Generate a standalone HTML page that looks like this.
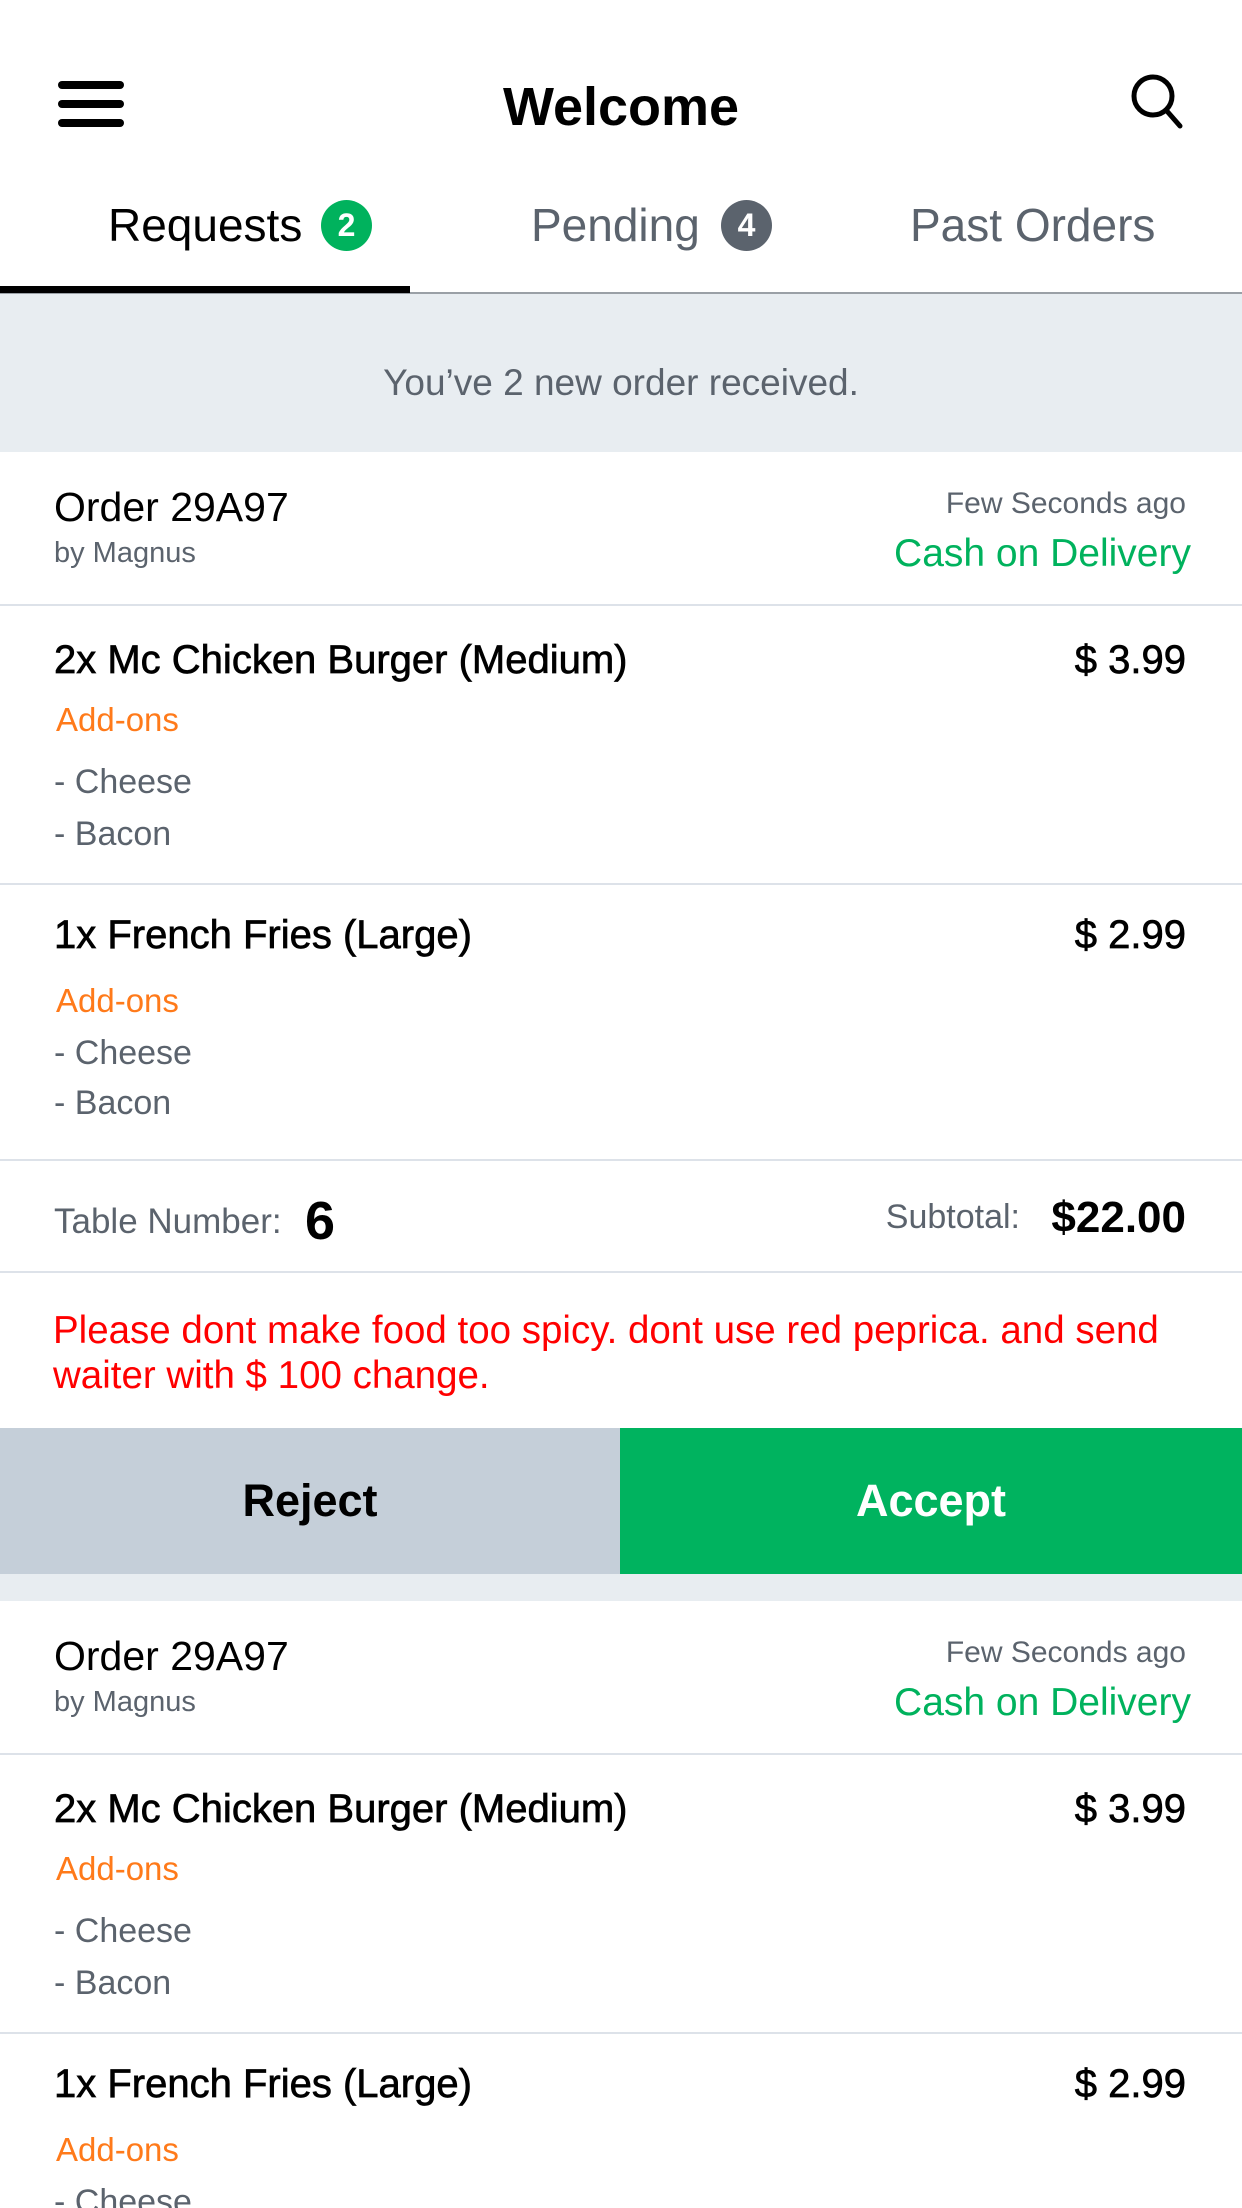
<!DOCTYPE html>
<html><head><meta charset="utf-8"><style>
*{margin:0;padding:0;box-sizing:border-box}
html,body{width:1242px;height:2208px;overflow:hidden;background:#fff;font-family:"Liberation Sans",sans-serif;position:relative}
.a{position:absolute;line-height:1;white-space:nowrap}
.card{position:absolute;left:0;width:1242px;background:#fff;overflow:hidden}
.hr{position:absolute;left:0;width:1242px;height:2px;background:#dde2e9}
.r{text-align:right;right:56px}
.gray{color:#5b636d}
.org{color:#ff7a1a}
.it{font-size:40px;color:#000;-webkit-text-stroke:0.7px #000}
</style></head><body>
<div class="a" style="left:58px;top:81px;width:66px;height:8px;background:#000;border-radius:4px"></div>
<div class="a" style="left:58px;top:100px;width:66px;height:8px;background:#000;border-radius:4px"></div>
<div class="a" style="left:58px;top:119px;width:66px;height:8px;background:#000;border-radius:4px"></div>
<div class="a" style="left:0;width:1242px;text-align:center;top:80px;font-size:54px;font-weight:bold;color:#000">Welcome</div>
<svg class="a" style="left:1128px;top:72px" width="60" height="60" viewBox="0 0 60 60"><circle cx="25" cy="24" r="19" fill="none" stroke="#000" stroke-width="5"/><line x1="38" y1="38" x2="52" y2="54" stroke="#000" stroke-width="5" stroke-linecap="round"/></svg>
<div class="a" style="left:108px;top:202px;font-size:46px;color:#000">Requests</div>
<div class="a" style="left:321px;top:200px;width:51px;height:51px;border-radius:50%;background:#00b25d;color:#fff;font-size:32px;text-align:center;line-height:51px;font-weight:bold">2</div>
<div class="a" style="left:531px;top:202px;font-size:46px;color:#5b636d">Pending</div>
<div class="a" style="left:721px;top:200px;width:51px;height:51px;border-radius:50%;background:#5b636d;color:#fff;font-size:32px;text-align:center;line-height:51px;font-weight:bold">4</div>
<div class="a" style="left:910px;top:202px;font-size:46px;color:#5b636d">Past Orders</div>
<div class="a" style="left:0;top:292px;width:1242px;height:2px;background:#9aa0a6"></div>
<div class="a" style="left:0;top:286px;width:410px;height:7px;background:#000"></div>
<div class="a" style="left:0;top:294px;width:1242px;height:1307px;background:#e8edf1"></div>
<div class="a" style="left:0;width:1242px;text-align:center;top:364px;font-size:37px;color:#5b636d">You’ve 2 new order received.</div>

<div class="card" style="top:452px;height:1122px">
 <div class="a" style="left:54px;top:35px;font-size:41px;color:#000">Order 29A97</div>
 <div class="a gray" style="left:54px;top:87px;font-size:29px">by Magnus</div>
 <div class="a gray r" style="top:37px;font-size:30px">Few Seconds ago</div>
 <div class="a" style="right:51px;top:82px;font-size:39px;color:#00b25d">Cash on Delivery</div>
 <div class="hr" style="top:152px"></div>
 <div class="a it" style="left:54px;top:188px">2x Mc Chicken Burger (Medium)</div>
 <div class="a r it" style="top:188px">$ 3.99</div>
 <div class="a org" style="left:56px;top:251px;font-size:33px">Add-ons</div>
 <div class="a gray" style="left:54px;top:313px;font-size:34px">- Cheese</div>
 <div class="a gray" style="left:54px;top:365px;font-size:34px">- Bacon</div>
 <div class="hr" style="top:431px"></div>
 <div class="a it" style="left:54px;top:463px">1x French Fries (Large)</div>
 <div class="a r it" style="top:463px">$ 2.99</div>
 <div class="a org" style="left:56px;top:532px;font-size:33px">Add-ons</div>
 <div class="a gray" style="left:54px;top:584px;font-size:34px">- Cheese</div>
 <div class="a gray" style="left:54px;top:634px;font-size:34px">- Bacon</div>
 <div class="hr" style="top:707px"></div>
 <div class="a gray" style="left:54px;top:752px;font-size:35px">Table Number:</div>
 <div class="a" style="left:305px;top:742px;font-size:54px;font-weight:bold;color:#000">6</div>
 <div class="a gray" style="right:222px;top:748px;font-size:34px">Subtotal:</div>
 <div class="a r" style="top:744px;font-size:44px;font-weight:bold;color:#000">$22.00</div>
 <div class="hr" style="top:819px"></div>
 <div class="a" style="left:53px;top:856px;font-size:38.5px;line-height:45px;color:#ff0000;white-space:normal;width:1150px">Please dont make food too spicy. dont use red peprica. and send waiter with $ 100 change.</div>
 <div class="a" style="left:0;top:976px;width:620px;height:146px;background:#c5cfd9;color:#000;font-size:45px;font-weight:bold;text-align:center;line-height:146px">Reject</div>
 <div class="a" style="left:620px;top:976px;width:622px;height:146px;background:#00b35f;color:#fff;font-size:45px;font-weight:bold;text-align:center;line-height:146px">Accept</div>
</div>

<div class="card" style="top:1601px;height:607px">
 <div class="a" style="left:54px;top:35px;font-size:41px;color:#000">Order 29A97</div>
 <div class="a gray" style="left:54px;top:87px;font-size:29px">by Magnus</div>
 <div class="a gray r" style="top:37px;font-size:30px">Few Seconds ago</div>
 <div class="a" style="right:51px;top:82px;font-size:39px;color:#00b25d">Cash on Delivery</div>
 <div class="hr" style="top:152px"></div>
 <div class="a it" style="left:54px;top:188px">2x Mc Chicken Burger (Medium)</div>
 <div class="a r it" style="top:188px">$ 3.99</div>
 <div class="a org" style="left:56px;top:251px;font-size:33px">Add-ons</div>
 <div class="a gray" style="left:54px;top:313px;font-size:34px">- Cheese</div>
 <div class="a gray" style="left:54px;top:365px;font-size:34px">- Bacon</div>
 <div class="hr" style="top:431px"></div>
 <div class="a it" style="left:54px;top:463px">1x French Fries (Large)</div>
 <div class="a r it" style="top:463px">$ 2.99</div>
 <div class="a org" style="left:56px;top:532px;font-size:33px">Add-ons</div>
 <div class="a gray" style="left:54px;top:584px;font-size:34px">- Cheese</div>
</div>
</body></html>
